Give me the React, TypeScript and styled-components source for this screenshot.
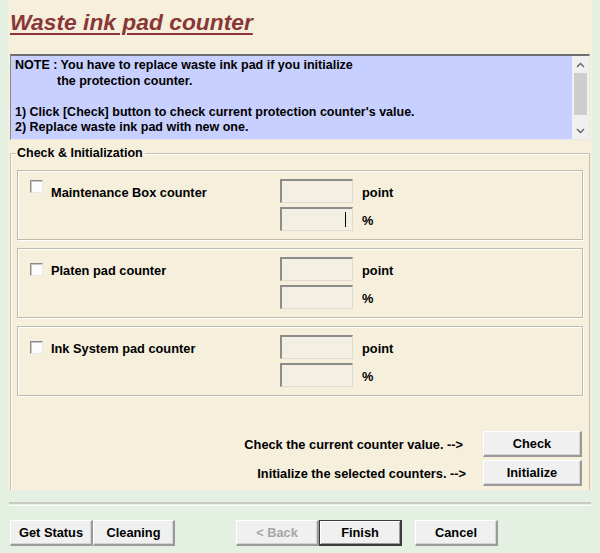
import React from "react";
import styled, { createGlobalStyle } from "styled-components";

const GlobalStyle = createGlobalStyle`
  body {
    margin: 0;
    background: #e4f1e2;
    font-family: "Liberation Sans", Arial, sans-serif;
  }
`;

const Window = styled.div`
  width: 600px;
  height: 553px;
  background: #e4f1e2;
  display: flex;
  flex-direction: column;
  overflow: hidden;
`;

const Panel = styled.div`
  margin-left: 8px;
  width: 584px;
  height: 490px;
  background: #f5efdc;
  display: flex;
  flex-direction: column;
  box-sizing: border-box;
  padding: 0 2px;
`;

const Title = styled.h1`
  margin: 9px 0 0 0;
  height: 45px;
  font-size: 22.8px;
  font-weight: bold;
  font-style: italic;
  color: #8a3636;
  text-decoration: underline;
  text-decoration-thickness: 2px;
  text-underline-offset: 3px;
  line-height: 26px;
`;

const NoteBox = styled.div`
  height: 86px;
  display: flex;
  background: #c8d0ff;
  border-top: 2px solid #6f6f6f;
  border-left: 1px solid #8a8a8a;
  border-right: 1px solid #e8e8e8;
  border-bottom: 1px solid #e8e8e8;
  box-sizing: border-box;
`;

const NoteText = styled.div`
  flex: 1;
  padding: 2px 0 0 4px;
  font-size: 12.5px;
  font-weight: bold;
  line-height: 15.5px;
  color: #000;
  white-space: pre;
`;

const Indent = styled.span`
  padding-left: 42px;
`;

const ScrollBar = styled.div`
  width: 17px;
  background: #f0f0f0;
  display: flex;
  flex-direction: column;
  align-items: center;
`;

const Arrow = styled.div`
  height: 17px;
  display: flex;
  align-items: center;
  justify-content: center;
  color: #606060;
`;

const Thumb = styled.div`
  width: 13px;
  height: 42px;
  background: #cdcdcd;
`;

const Track = styled.div`
  flex: 1;
`;

const Group = styled.fieldset`
  margin: 6px 0 0 0;
  padding: 10px 6px 0 6px;
  flex: 1;
  border: 1px solid #c4c0b4;
  border-bottom: none;
  box-shadow: inset 1px 1px 0 #ffffff;
  display: flex;
  flex-direction: column;
  gap: 8px;
  min-width: 0;
`;

const Legend = styled.legend`
  padding: 0 2px 0 1px;
  margin-left: -1px;
  font-size: 12.5px;
  font-weight: bold;
  line-height: 14px;
  color: #000;
`;

const CounterBox = styled.div`
  height: 70px;
  box-sizing: border-box;
  border: 1px solid #bdb9ad;
  box-shadow: 1px 1px 0 #ffffff, inset 1px 1px 0 #ffffff;
  display: grid;
  grid-template-columns: 21px 229px 82px auto;
  grid-template-rows: 24px 24px;
  row-gap: 4px;
  padding: 8px 0 0 12px;
  align-items: center;
`;

const Check = styled.span<{ $raised?: boolean }>`
  width: 11px;
  height: 11px;
  background: #fcfcfc;
  border-top: 1px solid #8a8a8a;
  border-left: 1px solid #8a8a8a;
  border-right: 1px solid #e6e6e6;
  border-bottom: 1px solid #e6e6e6;
  box-shadow: inset 1px 1px 0 #c8c8c8;
  align-self: ${(p) => (p.$raised ? "start" : "center")};
  margin-top: ${(p) => (p.$raised ? "1px" : "0")};
`;

const Label = styled.span`
  font-size: 12.8px;
  font-weight: bold;
  color: #000;
  padding-top: 2px;
`;

const Field = styled.div<{ $caret?: boolean }>`
  width: 73px;
  height: 24px;
  box-sizing: border-box;
  background: #f3efe2;
  border-top: 2px solid #8c8c8c;
  border-left: 2px solid #8c8c8c;
  border-right: 1px solid #dedbd0;
  border-bottom: 1px solid #dedbd0;
  position: relative;
  &::after {
    content: "";
    display: ${(p) => (p.$caret ? "block" : "none")};
    position: absolute;
    right: 6px;
    top: 3px;
    width: 1px;
    height: 15px;
    background: #000;
  }
`;

const Unit = styled.span`
  font-size: 12.8px;
  font-weight: bold;
  color: #000;
  padding-top: 2px;
`;

const Actions = styled.div`
  margin-top: 27px;
  display: flex;
  flex-direction: column;
  gap: 3px;
  padding-right: 1px;
`;

const ActionRow = styled.div<{ $textPad: number }>`
  display: flex;
  justify-content: flex-end;
  align-items: center;
  gap: ${(p) => p.$textPad}px;
`;

const ActionText = styled.span`
  font-size: 12.8px;
  font-weight: bold;
  color: #000;
`;

const Button = styled.button<{ $w?: number; $focus?: boolean }>`
  width: ${(p) => p.$w ?? 99}px;
  height: 26px;
  box-sizing: border-box;
  padding: 0;
  margin: 0;
  background: #f0f0f0;
  font-family: "Liberation Sans", Arial, sans-serif;
  font-size: 12.8px;
  font-weight: bold;
  color: #000;
  border-top: 1px solid ${(p) => (p.$focus ? "#3a3a3a" : "#ffffff")};
  border-left: 1px solid ${(p) => (p.$focus ? "#3a3a3a" : "#ffffff")};
  border-right: 2px solid ${(p) => (p.$focus ? "#3a3a3a" : "#9a9a9a")};
  border-bottom: 2px solid ${(p) => (p.$focus ? "#3a3a3a" : "#9a9a9a")};
  box-shadow: ${(p) =>
    p.$focus
      ? "inset 1px 1px 0 #ffffff, inset -1px -1px 0 #9a9a9a"
      : "inset -1px -1px 0 #d4d4d4"};
  &:disabled {
    color: #a6a6a6;
  }
`;

const Separator = styled.div`
  margin: 12px 0 0 9px;
  width: 582px;
  height: 1px;
  border-top: 2px solid #c6c9c4;
  border-bottom: 1px solid #ffffff;
`;

const Footer = styled.div`
  margin-top: 14px;
  padding-left: 10px;
  display: flex;
  align-items: center;
`;

const ButtonGroup = styled.div<{ $ml?: number }>`
  display: flex;
  margin-left: ${(p) => p.$ml ?? 0}px;
`;

const Chevron = ({ up }: { up?: boolean }) => (
  <svg width="9" height="6" viewBox="0 0 9 6">
    <path
      d={up ? "M1 5 L4.5 1.5 L8 5" : "M1 1 L4.5 4.5 L8 1"}
      fill="none"
      stroke="#606060"
      strokeWidth="1.4"
    />
  </svg>
);

const counters = [
  { name: "Maintenance Box counter", raised: true, caret: true },
  { name: "Platen pad counter" },
  { name: "Ink System pad counter" },
];

export default function App() {
  return (
    <Window>
      <GlobalStyle />
      <Panel>
        <Title>Waste ink pad counter</Title>
        <NoteBox>
          <NoteText>
            {"NOTE : You have to replace waste ink pad if you initialize\n"}
            <Indent>the protection counter.</Indent>
            {"\n\n1) Click [Check] button to check current protection counter's value.\n"}
            {"2) Replace waste ink pad with new one."}
          </NoteText>
          <ScrollBar>
            <Arrow>
              <Chevron up />
            </Arrow>
            <Thumb />
            <Track />
            <Arrow>
              <Chevron />
            </Arrow>
          </ScrollBar>
        </NoteBox>
        <Group>
          <Legend>Check &amp; Initialization</Legend>
          {counters.map((c) => (
            <CounterBox key={c.name}>
              <Check $raised={c.raised} />
              <Label>{c.name}</Label>
              <Field />
              <Unit>point</Unit>
              <span />
              <span />
              <Field $caret={c.caret} />
              <Unit>%</Unit>
            </CounterBox>
          ))}
          <Actions>
            <ActionRow $textPad={20}>
              <ActionText>Check the current counter value. --&gt;</ActionText>
              <Button>Check</Button>
            </ActionRow>
            <ActionRow $textPad={17}>
              <ActionText>Initialize the selected counters. --&gt;</ActionText>
              <Button>Initialize</Button>
            </ActionRow>
          </Actions>
        </Group>
      </Panel>
      <Separator />
      <Footer>
        <ButtonGroup>
          <Button $w={83}>Get Status</Button>
          <Button $w={82}>Cleaning</Button>
        </ButtonGroup>
        <ButtonGroup $ml={61}>
          <Button $w={83} disabled>
            &lt; Back
          </Button>
          <Button $w={83} $focus>
            Finish
          </Button>
        </ButtonGroup>
        <ButtonGroup $ml={13}>
          <Button $w={83}>Cancel</Button>
        </ButtonGroup>
      </Footer>
    </Window>
  );
}
